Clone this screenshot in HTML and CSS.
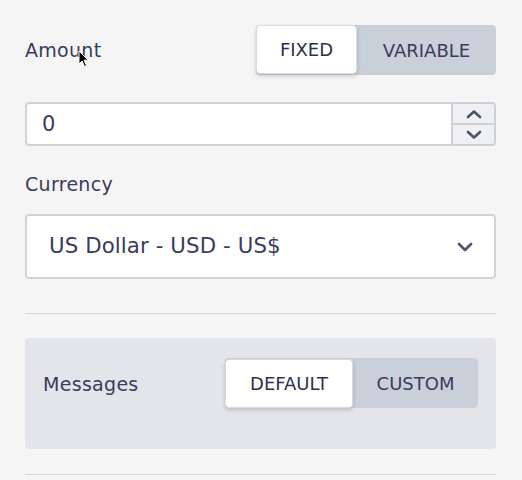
FILE: index.html
```html
<!DOCTYPE html>
<html>
<head>
<meta charset="utf-8">
<link rel="stylesheet" href="styles.css">
</head>
<body>
<div class="form">
  <div class="row">
    <span class="label">Amount</span>
    <div class="toggle">
      <button class="opt active w-fixed">FIXED</button>
      <button class="opt w-variable">VARIABLE</button>
    </div>
  </div>

  <div class="number">
    <div class="number-field">0</div>
    <div class="spinner">
      <div class="spin">
        <svg width="16" height="10" viewBox="0 0 16 10"><path d="M2 8 L8 2.5 L14 8" fill="none" stroke="#4b5567" stroke-width="2.6" stroke-linecap="round" stroke-linejoin="round"/></svg>
      </div>
      <div class="spin spin-down">
        <svg width="16" height="10" viewBox="0 0 16 10"><path d="M2 2 L8 7.5 L14 2" fill="none" stroke="#4b5567" stroke-width="2.6" stroke-linecap="round" stroke-linejoin="round"/></svg>
      </div>
    </div>
  </div>

  <div class="label currency-label">Currency</div>

  <div class="select">
    <span>US Dollar - USD - US$</span>
    <svg width="16" height="10" viewBox="0 0 16 10"><path d="M2 2 L8 8 L14 2" fill="none" stroke="#4e5a6b" stroke-width="2.8" stroke-linecap="round" stroke-linejoin="round"/></svg>
  </div>

  <div class="divider"></div>

  <div class="panel">
    <span class="label">Messages</span>
    <div class="toggle">
      <button class="opt active w-default">DEFAULT</button>
      <button class="opt w-custom">CUSTOM</button>
    </div>
  </div>

  <div class="divider divider-last"></div>
</div>

<svg class="cursor" width="12" height="18" viewBox="0 0 12 18"><path d="M1 1 L1 14 L4 11 L6.5 16.5 L8.5 15.6 L6 10.2 L10.2 10.2 Z" fill="#000" stroke="#fff" stroke-width="1" stroke-linejoin="round"/></svg>
</body>
</html>
```

FILE: styles.css
```css
* { box-sizing: border-box; }

html, body {
  margin: 0;
  padding: 0;
  background: #f5f5f6;
}

body {
  font-family: "DejaVu Sans", sans-serif;
  color: #393c5c;
  position: relative;
  width: 522px;
  height: 480px;
  overflow: hidden;
}

.form {
  padding: 25px 26px 0 25px;
  display: flex;
  flex-direction: column;
}

.row {
  display: flex;
  align-items: center;
  justify-content: space-between;
  height: 50px;
}

.label {
  font-size: 19px;
  line-height: 24px;
  letter-spacing: 0.3px;
}

.toggle {
  display: flex;
  height: 50px;
  background: #c9d0da;
  border-radius: 4px;
}

.opt {
  font-family: "DejaVu Sans", sans-serif;
  font-size: 18px;
  color: #393c5c;
  background: transparent;
  border: none;
  padding: 0;
  height: 50px;
  border-radius: 4px;
  cursor: pointer;
}

.opt.active {
  background: #ffffff;
  color: #2e3050;
  border: 1px solid #d9dadf;
  box-shadow: 0 2px 4px rgba(40, 45, 70, 0.22);
  height: 49px;
}

.w-fixed { width: 101px; }
.w-variable { width: 139px; }
.w-default { width: 128px; }
.w-custom { width: 125px; }

.panel .opt.active { height: 49px; margin-top: 1px; }

.number {
  display: flex;
  margin-top: 27px;
  height: 44px;
}

.number-field {
  flex: 1;
  background: #fff;
  border: 2px solid #d3d3d6;
  border-right: none;
  border-radius: 4px 0 0 4px;
  font-size: 21px;
  line-height: 40px;
  padding-left: 15px;
}

.spinner {
  width: 45px;
  display: flex;
  flex-direction: column;
  border: 2px solid #d0d1d5;
  border-radius: 0 4px 4px 0;
  background: #eef0f4;
}

.spin {
  flex: 1;
  display: flex;
  align-items: center;
  justify-content: center;
}

.spin-down {
  border-top: 2px solid #d0d1d5;
}

.currency-label {
  margin-top: 26px;
}

.select {
  margin-top: 18px;
  height: 65px;
  background: #fff;
  border: 2px solid #d3d3d6;
  border-radius: 4px;
  display: flex;
  align-items: center;
  justify-content: space-between;
  padding: 0 21px 0 22px;
  font-size: 21.3px;
}

.select span {
  letter-spacing: 0.1px;
  margin-bottom: 2px;
}

.divider {
  height: 1px;
  background: #d7d7da;
  margin-top: 34px;
}

.panel {
  margin-top: 24px;
  height: 111px;
  background: #e4e5ea;
  border-radius: 4px;
  display: flex;
  justify-content: space-between;
  align-items: flex-start;
  padding: 20px 18px 0 18px;
}

.panel .label {
  margin-top: 14px;
}

.divider-last {
  margin-top: 25px;
}

.cursor {
  position: absolute;
  left: 78px;
  top: 50px;
}
```
